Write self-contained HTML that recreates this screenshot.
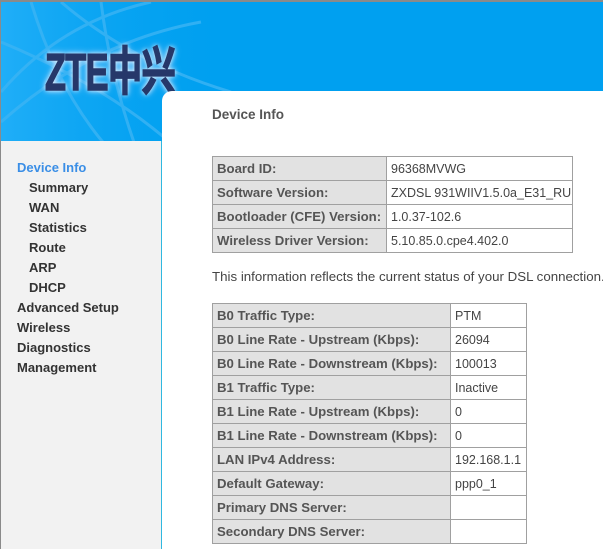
<!DOCTYPE html>
<html><head><meta charset="utf-8"><style>
*{margin:0;padding:0;box-sizing:border-box}
body{width:603px;height:549px;overflow:hidden;background:#fff;font-family:"Liberation Sans",Tahoma,sans-serif;position:relative}
.frame{position:absolute;left:0;top:0;width:603px;height:549px;border-top:2px solid #8a8a8a;border-left:1px solid #8a8a8a}
.hdr{position:absolute;left:1px;top:2px;width:602px;height:160px;background:#00a0f0;overflow:hidden}
.logo{position:absolute;left:44px;top:28px;font:bold 52px "Liberation Sans","Noto Sans CJK SC",sans-serif;color:#26386a;-webkit-text-stroke:1.5px #26386a;transform:scaleX(.66);transform-origin:left;text-shadow:0 0 6px #fff,0 0 10px #cdf;letter-spacing:-1px}
.side{position:absolute;left:1px;top:141px;width:161px;height:408px;background:#f2f2f2;border-right:1px solid #30b8e0}
.side div{position:absolute;font-weight:bold;font-size:13px;color:#333}
.content{position:absolute;left:162px;top:91px;width:441px;height:458px;background:#fff;border-top-left-radius:10px}
.t{position:absolute;font-size:13px;color:#555;white-space:nowrap}
table{position:absolute;border-collapse:collapse;font-size:12.5px;table-layout:fixed}
td{height:24px;border:1px solid #a0a0a0;padding:0 4px;color:#444;white-space:nowrap;overflow:hidden}
td.l{background:#e2e2e2;font-weight:bold;color:#555;font-size:13.2px}
</style></head><body>
<div class="hdr">
<svg width="602" height="160" style="position:absolute;left:0;top:0">
<defs><linearGradient id="g" x1="0" x2="1" y1="0" y2="0"><stop offset="0" stop-color="#40bcff" stop-opacity=".5"/><stop offset="1" stop-color="#00a0f0" stop-opacity="0"/></linearGradient></defs>
<rect x="0" y="0" width="240" height="160" fill="url(#g)"/>
<g stroke="#3cb4f4" stroke-width="3" fill="none" opacity=".8">
<path d="M0 40 Q120 90 190 160"/><path d="M30 0 Q60 100 120 160"/><path d="M100 0 Q110 80 140 160"/>
<path d="M0 120 Q90 40 200 20"/><path d="M60 0 Q130 60 230 90"/><path d="M0 90 Q60 20 150 0"/>
</g>
</svg>
<div class="logo">ZTE中兴</div>
</div>
<div class="side">
<div style="left:16px;top:19px;color:#3a8ee6">Device Info</div>
<div style="left:28px;top:39px">Summary</div>
<div style="left:28px;top:59px">WAN</div>
<div style="left:28px;top:79px">Statistics</div>
<div style="left:28px;top:99px">Route</div>
<div style="left:28px;top:119px">ARP</div>
<div style="left:28px;top:139px">DHCP</div>
<div style="left:16px;top:159px">Advanced Setup</div>
<div style="left:16px;top:179px">Wireless</div>
<div style="left:16px;top:199px">Diagnostics</div>
<div style="left:16px;top:219px">Management</div>
</div>
<div class="content"></div>
<div class="t" style="left:212px;top:107px;font-weight:bold;font-size:13.5px">Device Info</div>
<table style="left:212px;top:156px;width:360px">
<col style="width:174px"><col style="width:186px">
<tr><td class="l">Board ID:</td><td>96368MVWG</td></tr>
<tr><td class="l">Software Version:</td><td>ZXDSL 931WIIV1.5.0a_E31_RU</td></tr>
<tr><td class="l">Bootloader (CFE) Version:</td><td>1.0.37-102.6</td></tr>
<tr><td class="l">Wireless Driver Version:</td><td>5.10.85.0.cpe4.402.0</td></tr>
</table>
<div class="t" style="left:212px;top:269px;color:#444;font-size:13.3px">This information reflects the current status of your DSL connection.</div>
<table style="left:212px;top:303px;width:314px">
<col style="width:238px"><col style="width:76px">
<tr><td class="l">B0 Traffic Type:</td><td>PTM</td></tr>
<tr><td class="l">B0 Line Rate - Upstream (Kbps):</td><td>26094</td></tr>
<tr><td class="l">B0 Line Rate - Downstream (Kbps):</td><td>100013</td></tr>
<tr><td class="l">B1 Traffic Type:</td><td>Inactive</td></tr>
<tr><td class="l">B1 Line Rate - Upstream (Kbps):</td><td>0</td></tr>
<tr><td class="l">B1 Line Rate - Downstream (Kbps):</td><td>0</td></tr>
<tr><td class="l">LAN IPv4 Address:</td><td>192.168.1.1</td></tr>
<tr><td class="l">Default Gateway:</td><td>ppp0_1</td></tr>
<tr><td class="l">Primary DNS Server:</td><td></td></tr>
<tr><td class="l">Secondary DNS Server:</td><td></td></tr>
</table>
<div class="frame"></div>
</body></html>
